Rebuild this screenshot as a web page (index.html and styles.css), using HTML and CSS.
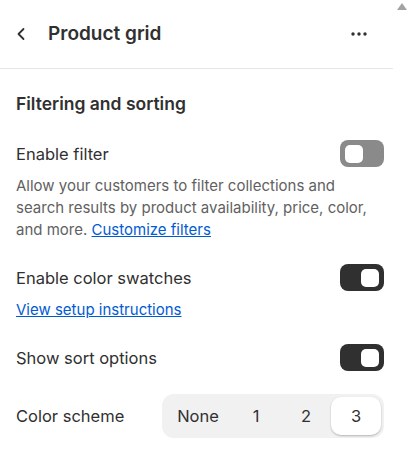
FILE: index.html
```html
<!DOCTYPE html>
<html lang="en">
<head>
<meta charset="utf-8">
<title>Product grid</title>
<link rel="stylesheet" href="styles.css">
</head>
<body>
<div class="frame">
  <div class="panel">
    <header class="header">
      <button class="icon-btn back" aria-label="Back">
        <svg width="20" height="20" viewBox="0 0 20 20"><path d="M12.5 5 L7.5 10 L12.5 15" fill="none" stroke="#303030" stroke-width="1.8" stroke-linecap="round" stroke-linejoin="round"/></svg>
      </button>
      <h1 class="title">Product grid</h1>
      <button class="icon-btn more" aria-label="More">
        <svg width="20" height="20" viewBox="0 0 20 20"><circle cx="4" cy="10" r="1.7" fill="#303030"/><circle cx="10" cy="10" r="1.7" fill="#303030"/><circle cx="16" cy="10" r="1.7" fill="#303030"/></svg>
      </button>
    </header>
    <section class="section">
      <h2 class="section-title">Filtering and sorting</h2>
      <div class="group">
        <div class="row">
          <span class="label">Enable filter</span>
          <span class="toggle off"><span class="thumb"></span></span>
        </div>
        <p class="help">Allow your customers to filter collections and search results by product availability, price, color, and more. <a href="#" class="link">Customize filters</a></p>
      </div>
      <div class="group">
        <div class="row">
          <span class="label">Enable color swatches</span>
          <span class="toggle on"><span class="thumb"></span></span>
        </div>
        <p class="help short"><a href="#" class="link">View setup instructions</a></p>
      </div>
      <div class="group">
        <div class="row">
          <span class="label">Show sort options</span>
          <span class="toggle on"><span class="thumb"></span></span>
        </div>
      </div>
      <div class="group">
        <div class="row">
          <span class="label">Color scheme</span>
          <div class="segmented">
            <span class="seg">None</span>
            <span class="seg">1</span>
            <span class="seg">2</span>
            <span class="seg active">3</span>
          </div>
        </div>
      </div>
    </section>
  </div>
  <div class="scrollbar"><span class="arrow-up"></span></div>
</div>
</body>
</html>
```
FILE: styles.css
```css
* { box-sizing: border-box; }
html, body { margin: 0; padding: 0; background: #fff; }
body {
  font-family: Inter, "Noto Sans", "Liberation Sans", sans-serif;
  color: #303030;
  width: 410px;
  height: 458px;
  overflow: hidden;
}
.frame { display: flex; height: 458px; }
.panel { width: 393px; flex: none; }
.scrollbar { flex: 1; display: flex; justify-content: center; padding-top: 3px; }
.arrow-up {
  width: 0; height: 0;
  border-left: 5px solid transparent;
  border-right: 5px solid transparent;
  border-bottom: 7px solid #a3a3a3;
}
.header {
  height: 69px;
  display: flex;
  align-items: center;
  padding: 0 24px 0 11px;
  border-bottom: 1px solid #e6e6e6;
}
.icon-btn {
  border: 0; background: none; padding: 0; margin: 0;
  width: 20px; height: 20px; display: flex;
}
.back { margin-right: 17px; }
.title {
  margin: 0;
  font-size: 19px;
  font-weight: 600;
  line-height: 24px;
  flex: 1;
  color: #303030;
}
.section { padding: 23px 9px 0 16px; display: flex; flex-direction: column; gap: 23px; }
.section-title { margin: 0 0 1px; font-size: 17.5px; font-weight: 600; line-height: 24px; }
.group { display: flex; flex-direction: column; gap: 8px; }
.row { display: flex; align-items: center; justify-content: space-between; min-height: 27px; }
.label { font-size: 16.5px; line-height: 22px; color: #303030; }
.help { margin: 0; font-size: 15px; line-height: 22px; color: #616161; }
.link { color: #005bd3; text-decoration: underline; }
.toggle {
  width: 44px; height: 27px; border-radius: 8px;
  display: flex; align-items: center; padding: 0 5px;
}
.toggle.off { background: #8a8a8a; justify-content: flex-start; }
.toggle.on { background: #303030; justify-content: flex-end; }
.thumb { width: 18px; height: 18px; border-radius: 5px; background: #fff; }
.segmented {
  display: flex;
  background: #f1f1f1;
  border-radius: 12px;
  padding: 3px;
  height: 44px;
  width: 222px;
}
.seg {
  flex: none; width: 50px;
  display: flex; align-items: center; justify-content: center;
  font-size: 16.5px; color: #303030; border-radius: 10px;
}
.seg:first-child { width: 66px; }
.seg.active { background: #fff; box-shadow: 0 1px 2px rgba(0,0,0,0.25); }
```
